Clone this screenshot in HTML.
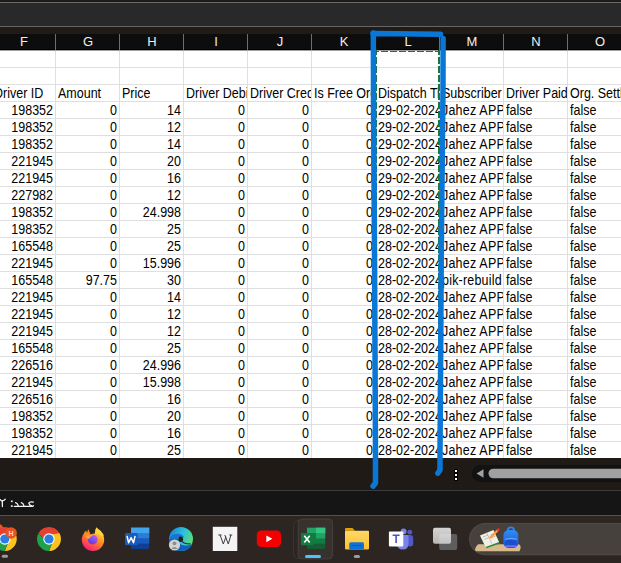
<!DOCTYPE html>
<html><head><meta charset="utf-8"><style>
*{margin:0;padding:0;box-sizing:border-box}
html,body{width:621px;height:563px;overflow:hidden;background:#1f1a16;position:relative;font-family:"Liberation Sans",sans-serif}
.abs{position:absolute}
#grid{position:absolute;left:0;top:50px;width:621px;height:408px;background:#fff;overflow:hidden}
.vl{position:absolute;top:0;width:1px;height:408px;background:#dfdfdf}
.hl{position:absolute;left:0;width:621px;height:1px;background:#dfdfdf}
.c{position:absolute;width:63px;height:16px;overflow:hidden;white-space:nowrap;font-size:12.5px;line-height:16px;color:#000;padding-left:2px;letter-spacing:0px;transform:scaleY(1.14);transform-origin:50% 13px}
.c.m{letter-spacing:0.2px}
.c.r{text-align:right;padding-left:0;padding-right:2px}
#hdr{position:absolute;left:0;top:34px;width:621px;height:16px;overflow:hidden}
#hdrbg{position:absolute;left:0;top:34px;width:621px;height:15px;background:#0d0d0d}
.hsep{position:absolute;top:0;width:1px;height:16px;background:#6d6d72}
.ch{position:absolute;top:0;width:64px;margin-left:1px;height:15px;text-align:center;color:#f0f0f0;font-size:13px;line-height:15px}
</style></head><body>
<div class="abs" style="left:0;top:0;width:621px;height:2px;background:#1e1915"></div>
<div class="abs" style="left:0;top:2px;width:621px;height:1px;background:#6a6a6a"></div>
<div class="abs" style="left:0;top:3px;width:621px;height:23px;background:#292929"></div>
<div class="abs" style="left:0;top:26px;width:621px;height:1px;background:#666"></div>
<div class="abs" style="left:0;top:27px;width:621px;height:7px;background:#211b17"></div>
<div id="hdrbg"></div>
<div class="abs" style="left:0;top:49px;width:621px;height:1px;background:#000"></div>
<div id="hdr">
<div class="hsep" style="left:55px"></div>
<div class="hsep" style="left:119px"></div>
<div class="hsep" style="left:183px"></div>
<div class="hsep" style="left:247px"></div>
<div class="hsep" style="left:311px"></div>
<div class="hsep" style="left:375px"></div>
<div class="hsep" style="left:439px"></div>
<div class="hsep" style="left:503px"></div>
<div class="hsep" style="left:567px"></div>
<div class="ch" style="left:-9px">F</div>
<div class="ch" style="left:55px">G</div>
<div class="ch" style="left:119px">H</div>
<div class="ch" style="left:183px">I</div>
<div class="ch" style="left:247px">J</div>
<div class="ch" style="left:311px">K</div>
<div class="ch" style="left:375px">L</div>
<div class="ch" style="left:439px">M</div>
<div class="ch" style="left:503px">N</div>
<div class="ch" style="left:567px">O</div>
</div>
<div id="grid">
<div class="vl" style="left:55px"></div>
<div class="vl" style="left:119px"></div>
<div class="vl" style="left:183px"></div>
<div class="vl" style="left:247px"></div>
<div class="vl" style="left:311px"></div>
<div class="vl" style="left:375px"></div>
<div class="vl" style="left:439px"></div>
<div class="vl" style="left:503px"></div>
<div class="vl" style="left:567px"></div>
<div class="hl" style="top:17px"></div>
<div class="hl" style="top:34px"></div>
<div class="hl" style="top:51px"></div>
<div class="hl" style="top:68px"></div>
<div class="hl" style="top:85px"></div>
<div class="hl" style="top:102px"></div>
<div class="hl" style="top:119px"></div>
<div class="hl" style="top:136px"></div>
<div class="hl" style="top:153px"></div>
<div class="hl" style="top:170px"></div>
<div class="hl" style="top:187px"></div>
<div class="hl" style="top:204px"></div>
<div class="hl" style="top:221px"></div>
<div class="hl" style="top:238px"></div>
<div class="hl" style="top:255px"></div>
<div class="hl" style="top:272px"></div>
<div class="hl" style="top:289px"></div>
<div class="hl" style="top:306px"></div>
<div class="hl" style="top:323px"></div>
<div class="hl" style="top:340px"></div>
<div class="hl" style="top:357px"></div>
<div class="hl" style="top:374px"></div>
<div class="hl" style="top:391px"></div>
<div class="abs" style="left:0;top:0;width:621px;height:1px;background:#a0a0a0"></div>
<div class="c" style="left:-8px;top:36px">Driver ID</div>
<div class="c" style="left:56px;top:36px">Amount</div>
<div class="c" style="left:120px;top:36px">Price</div>
<div class="c" style="left:184px;top:36px">Driver Debit</div>
<div class="c" style="left:248px;top:36px">Driver Credit</div>
<div class="c" style="left:312px;top:36px">Is Free Order</div>
<div class="c" style="left:376px;top:36px">Dispatch Time</div>
<div class="c" style="left:440px;top:36px">Subscriber</div>
<div class="c" style="left:504px;top:36px">Driver Paid</div>
<div class="c" style="left:568px;top:36px">Org. Settled</div>
<div class="c r" style="left:-8px;top:53px">198352</div>
<div class="c r" style="left:56px;top:53px">0</div>
<div class="c r" style="left:120px;top:53px">14</div>
<div class="c r" style="left:184px;top:53px">0</div>
<div class="c r" style="left:248px;top:53px">0</div>
<div class="c r" style="left:312px;top:53px">0</div>
<div class="c" style="left:376px;top:53px">29-02-2024</div>
<div class="c m" style="left:440px;top:53px">Jahez APP</div>
<div class="c" style="left:504px;top:53px">false</div>
<div class="c" style="left:568px;top:53px">false</div>
<div class="c r" style="left:-8px;top:70px">198352</div>
<div class="c r" style="left:56px;top:70px">0</div>
<div class="c r" style="left:120px;top:70px">12</div>
<div class="c r" style="left:184px;top:70px">0</div>
<div class="c r" style="left:248px;top:70px">0</div>
<div class="c r" style="left:312px;top:70px">0</div>
<div class="c" style="left:376px;top:70px">29-02-2024</div>
<div class="c m" style="left:440px;top:70px">Jahez APP</div>
<div class="c" style="left:504px;top:70px">false</div>
<div class="c" style="left:568px;top:70px">false</div>
<div class="c r" style="left:-8px;top:87px">198352</div>
<div class="c r" style="left:56px;top:87px">0</div>
<div class="c r" style="left:120px;top:87px">14</div>
<div class="c r" style="left:184px;top:87px">0</div>
<div class="c r" style="left:248px;top:87px">0</div>
<div class="c r" style="left:312px;top:87px">0</div>
<div class="c" style="left:376px;top:87px">29-02-2024</div>
<div class="c m" style="left:440px;top:87px">Jahez APP</div>
<div class="c" style="left:504px;top:87px">false</div>
<div class="c" style="left:568px;top:87px">false</div>
<div class="c r" style="left:-8px;top:104px">221945</div>
<div class="c r" style="left:56px;top:104px">0</div>
<div class="c r" style="left:120px;top:104px">20</div>
<div class="c r" style="left:184px;top:104px">0</div>
<div class="c r" style="left:248px;top:104px">0</div>
<div class="c r" style="left:312px;top:104px">0</div>
<div class="c" style="left:376px;top:104px">29-02-2024</div>
<div class="c m" style="left:440px;top:104px">Jahez APP</div>
<div class="c" style="left:504px;top:104px">false</div>
<div class="c" style="left:568px;top:104px">false</div>
<div class="c r" style="left:-8px;top:121px">221945</div>
<div class="c r" style="left:56px;top:121px">0</div>
<div class="c r" style="left:120px;top:121px">16</div>
<div class="c r" style="left:184px;top:121px">0</div>
<div class="c r" style="left:248px;top:121px">0</div>
<div class="c r" style="left:312px;top:121px">0</div>
<div class="c" style="left:376px;top:121px">29-02-2024</div>
<div class="c m" style="left:440px;top:121px">Jahez APP</div>
<div class="c" style="left:504px;top:121px">false</div>
<div class="c" style="left:568px;top:121px">false</div>
<div class="c r" style="left:-8px;top:138px">227982</div>
<div class="c r" style="left:56px;top:138px">0</div>
<div class="c r" style="left:120px;top:138px">12</div>
<div class="c r" style="left:184px;top:138px">0</div>
<div class="c r" style="left:248px;top:138px">0</div>
<div class="c r" style="left:312px;top:138px">0</div>
<div class="c" style="left:376px;top:138px">29-02-2024</div>
<div class="c m" style="left:440px;top:138px">Jahez APP</div>
<div class="c" style="left:504px;top:138px">false</div>
<div class="c" style="left:568px;top:138px">false</div>
<div class="c r" style="left:-8px;top:155px">198352</div>
<div class="c r" style="left:56px;top:155px">0</div>
<div class="c r" style="left:120px;top:155px">24.998</div>
<div class="c r" style="left:184px;top:155px">0</div>
<div class="c r" style="left:248px;top:155px">0</div>
<div class="c r" style="left:312px;top:155px">0</div>
<div class="c" style="left:376px;top:155px">29-02-2024</div>
<div class="c m" style="left:440px;top:155px">Jahez APP</div>
<div class="c" style="left:504px;top:155px">false</div>
<div class="c" style="left:568px;top:155px">false</div>
<div class="c r" style="left:-8px;top:172px">198352</div>
<div class="c r" style="left:56px;top:172px">0</div>
<div class="c r" style="left:120px;top:172px">25</div>
<div class="c r" style="left:184px;top:172px">0</div>
<div class="c r" style="left:248px;top:172px">0</div>
<div class="c r" style="left:312px;top:172px">0</div>
<div class="c" style="left:376px;top:172px">28-02-2024</div>
<div class="c m" style="left:440px;top:172px">Jahez APP</div>
<div class="c" style="left:504px;top:172px">false</div>
<div class="c" style="left:568px;top:172px">false</div>
<div class="c r" style="left:-8px;top:189px">165548</div>
<div class="c r" style="left:56px;top:189px">0</div>
<div class="c r" style="left:120px;top:189px">25</div>
<div class="c r" style="left:184px;top:189px">0</div>
<div class="c r" style="left:248px;top:189px">0</div>
<div class="c r" style="left:312px;top:189px">0</div>
<div class="c" style="left:376px;top:189px">28-02-2024</div>
<div class="c m" style="left:440px;top:189px">Jahez APP</div>
<div class="c" style="left:504px;top:189px">false</div>
<div class="c" style="left:568px;top:189px">false</div>
<div class="c r" style="left:-8px;top:206px">221945</div>
<div class="c r" style="left:56px;top:206px">0</div>
<div class="c r" style="left:120px;top:206px">15.996</div>
<div class="c r" style="left:184px;top:206px">0</div>
<div class="c r" style="left:248px;top:206px">0</div>
<div class="c r" style="left:312px;top:206px">0</div>
<div class="c" style="left:376px;top:206px">28-02-2024</div>
<div class="c m" style="left:440px;top:206px">Jahez APP</div>
<div class="c" style="left:504px;top:206px">false</div>
<div class="c" style="left:568px;top:206px">false</div>
<div class="c r" style="left:-8px;top:223px">165548</div>
<div class="c r" style="left:56px;top:223px">97.75</div>
<div class="c r" style="left:120px;top:223px">30</div>
<div class="c r" style="left:184px;top:223px">0</div>
<div class="c r" style="left:248px;top:223px">0</div>
<div class="c r" style="left:312px;top:223px">0</div>
<div class="c" style="left:376px;top:223px">28-02-2024</div>
<div class="c m" style="left:440px;top:223px">pik-rebuild</div>
<div class="c" style="left:504px;top:223px">false</div>
<div class="c" style="left:568px;top:223px">false</div>
<div class="c r" style="left:-8px;top:240px">221945</div>
<div class="c r" style="left:56px;top:240px">0</div>
<div class="c r" style="left:120px;top:240px">14</div>
<div class="c r" style="left:184px;top:240px">0</div>
<div class="c r" style="left:248px;top:240px">0</div>
<div class="c r" style="left:312px;top:240px">0</div>
<div class="c" style="left:376px;top:240px">28-02-2024</div>
<div class="c m" style="left:440px;top:240px">Jahez APP</div>
<div class="c" style="left:504px;top:240px">false</div>
<div class="c" style="left:568px;top:240px">false</div>
<div class="c r" style="left:-8px;top:257px">221945</div>
<div class="c r" style="left:56px;top:257px">0</div>
<div class="c r" style="left:120px;top:257px">12</div>
<div class="c r" style="left:184px;top:257px">0</div>
<div class="c r" style="left:248px;top:257px">0</div>
<div class="c r" style="left:312px;top:257px">0</div>
<div class="c" style="left:376px;top:257px">28-02-2024</div>
<div class="c m" style="left:440px;top:257px">Jahez APP</div>
<div class="c" style="left:504px;top:257px">false</div>
<div class="c" style="left:568px;top:257px">false</div>
<div class="c r" style="left:-8px;top:274px">221945</div>
<div class="c r" style="left:56px;top:274px">0</div>
<div class="c r" style="left:120px;top:274px">12</div>
<div class="c r" style="left:184px;top:274px">0</div>
<div class="c r" style="left:248px;top:274px">0</div>
<div class="c r" style="left:312px;top:274px">0</div>
<div class="c" style="left:376px;top:274px">28-02-2024</div>
<div class="c m" style="left:440px;top:274px">Jahez APP</div>
<div class="c" style="left:504px;top:274px">false</div>
<div class="c" style="left:568px;top:274px">false</div>
<div class="c r" style="left:-8px;top:291px">165548</div>
<div class="c r" style="left:56px;top:291px">0</div>
<div class="c r" style="left:120px;top:291px">25</div>
<div class="c r" style="left:184px;top:291px">0</div>
<div class="c r" style="left:248px;top:291px">0</div>
<div class="c r" style="left:312px;top:291px">0</div>
<div class="c" style="left:376px;top:291px">28-02-2024</div>
<div class="c m" style="left:440px;top:291px">Jahez APP</div>
<div class="c" style="left:504px;top:291px">false</div>
<div class="c" style="left:568px;top:291px">false</div>
<div class="c r" style="left:-8px;top:308px">226516</div>
<div class="c r" style="left:56px;top:308px">0</div>
<div class="c r" style="left:120px;top:308px">24.996</div>
<div class="c r" style="left:184px;top:308px">0</div>
<div class="c r" style="left:248px;top:308px">0</div>
<div class="c r" style="left:312px;top:308px">0</div>
<div class="c" style="left:376px;top:308px">28-02-2024</div>
<div class="c m" style="left:440px;top:308px">Jahez APP</div>
<div class="c" style="left:504px;top:308px">false</div>
<div class="c" style="left:568px;top:308px">false</div>
<div class="c r" style="left:-8px;top:325px">221945</div>
<div class="c r" style="left:56px;top:325px">0</div>
<div class="c r" style="left:120px;top:325px">15.998</div>
<div class="c r" style="left:184px;top:325px">0</div>
<div class="c r" style="left:248px;top:325px">0</div>
<div class="c r" style="left:312px;top:325px">0</div>
<div class="c" style="left:376px;top:325px">28-02-2024</div>
<div class="c m" style="left:440px;top:325px">Jahez APP</div>
<div class="c" style="left:504px;top:325px">false</div>
<div class="c" style="left:568px;top:325px">false</div>
<div class="c r" style="left:-8px;top:342px">226516</div>
<div class="c r" style="left:56px;top:342px">0</div>
<div class="c r" style="left:120px;top:342px">16</div>
<div class="c r" style="left:184px;top:342px">0</div>
<div class="c r" style="left:248px;top:342px">0</div>
<div class="c r" style="left:312px;top:342px">0</div>
<div class="c" style="left:376px;top:342px">28-02-2024</div>
<div class="c m" style="left:440px;top:342px">Jahez APP</div>
<div class="c" style="left:504px;top:342px">false</div>
<div class="c" style="left:568px;top:342px">false</div>
<div class="c r" style="left:-8px;top:359px">198352</div>
<div class="c r" style="left:56px;top:359px">0</div>
<div class="c r" style="left:120px;top:359px">20</div>
<div class="c r" style="left:184px;top:359px">0</div>
<div class="c r" style="left:248px;top:359px">0</div>
<div class="c r" style="left:312px;top:359px">0</div>
<div class="c" style="left:376px;top:359px">28-02-2024</div>
<div class="c m" style="left:440px;top:359px">Jahez APP</div>
<div class="c" style="left:504px;top:359px">false</div>
<div class="c" style="left:568px;top:359px">false</div>
<div class="c r" style="left:-8px;top:376px">198352</div>
<div class="c r" style="left:56px;top:376px">0</div>
<div class="c r" style="left:120px;top:376px">16</div>
<div class="c r" style="left:184px;top:376px">0</div>
<div class="c r" style="left:248px;top:376px">0</div>
<div class="c r" style="left:312px;top:376px">0</div>
<div class="c" style="left:376px;top:376px">28-02-2024</div>
<div class="c m" style="left:440px;top:376px">Jahez APP</div>
<div class="c" style="left:504px;top:376px">false</div>
<div class="c" style="left:568px;top:376px">false</div>
<div class="c r" style="left:-8px;top:393px">221945</div>
<div class="c r" style="left:56px;top:393px">0</div>
<div class="c r" style="left:120px;top:393px">25</div>
<div class="c r" style="left:184px;top:393px">0</div>
<div class="c r" style="left:248px;top:393px">0</div>
<div class="c r" style="left:312px;top:393px">0</div>
<div class="c" style="left:376px;top:393px">28-02-2024</div>
<div class="c m" style="left:440px;top:393px">Jahez APP</div>
<div class="c" style="left:504px;top:393px">false</div>
<div class="c" style="left:568px;top:393px">false</div>
</div>
<div class="abs" style="left:0;top:490px;width:621px;height:1px;background:#3b3b3b"></div>
<div class="abs" style="left:0;top:491px;width:621px;height:24px;background:#151515"></div>
<div class="abs" style="left:0;top:515px;width:621px;height:48px;background:#2c2522"></div>

<!-- marching ants -->
<div class="abs" style="left:376px;top:51px;width:63px;height:1px;background:linear-gradient(to right,#1a7540 0 7px,transparent 7px 9px);background-size:9px 1px;background-position:-4px 0"></div>
<div id="antsR" class="abs" style="left:438px;top:50px;width:2px;height:408px;background:linear-gradient(to bottom,#1a7540 0 7px,transparent 7px 9px);background-size:2px 9px;background-position:0 -2px"></div>
<div class="abs" style="left:376px;top:50px;width:1px;height:408px;background:linear-gradient(to bottom,#1a7540 0 7px,transparent 7px 9px);background-size:1px 9px;background-position:0 -2px"></div>
<!-- bottom bar -->
<div class="abs" style="left:455px;top:470px;width:2px;height:2px;background:#fff;box-shadow:0 0 0 1px #000"></div>
<div class="abs" style="left:455px;top:474px;width:2px;height:2px;background:#fff;box-shadow:0 0 0 1px #000"></div>
<div class="abs" style="left:455px;top:478px;width:2px;height:2px;background:#fff;box-shadow:0 0 0 1px #000"></div>
<div class="abs" style="left:472px;top:465px;width:170px;height:17px;border-radius:8.5px;background:#121212"></div>
<svg class="abs" style="left:0;top:0" width="621" height="563">
<path d="M476.5,473.5 L483.5,469.2 L483.5,477.8 Z" fill="#a2a2a2"/>
<rect x="488.5" y="468.7" width="150" height="9.6" rx="4.8" fill="#a0a0a0"/>
</svg>
<!-- status text -->
<svg class="abs" style="left:0;top:494px" width="40" height="18" fill="none" stroke="#f2f2f2" stroke-width="1.3" stroke-linecap="round" stroke-linejoin="round">
<path d="M0.3,5.6 Q1.3,7.4 2.3,6.6 L2.4,12.6"/>
<path d="M2.5,6.9 Q4.2,6.6 5.3,5.2"/>
<rect x="10.9" y="6.5" width="1.8" height="1.6" fill="#f2f2f2" stroke="none"/>
<rect x="10.9" y="11.3" width="1.8" height="1.6" fill="#f2f2f2" stroke="none"/>
<path d="M14.3,12.3 L32.3,12.3 Q33.6,12.2 33.4,11.6"/>
<path d="M15.6,8.6 Q17.9,9.4 18.3,12.2"/>
<path d="M21.3,8.6 Q23.6,9.4 24,12.2"/>
<path d="M33.3,8.2 Q29.6,7.2 28.8,9.2 Q29.4,11.2 32,12.2"/>
</svg>

<!-- taskbar -->
<svg class="abs" style="left:0;top:515px" width="621" height="48" viewBox="0 515 621 48">
<defs>
<linearGradient id="ff" x1="0.8" y1="0" x2="0.2" y2="1"><stop offset="0" stop-color="#ffe54a"/><stop offset="0.45" stop-color="#ff8a1c"/><stop offset="0.8" stop-color="#ff3b5c"/><stop offset="1" stop-color="#e5178a"/></linearGradient>
<linearGradient id="edge" x1="0" y1="1" x2="1" y2="0"><stop offset="0" stop-color="#0c54b4"/><stop offset="0.45" stop-color="#1b9de2"/><stop offset="0.7" stop-color="#30c0d8"/><stop offset="1" stop-color="#6ae35a"/></linearGradient>
<linearGradient id="fold" x1="0" y1="0" x2="0" y2="1"><stop offset="0" stop-color="#ffd96a"/><stop offset="1" stop-color="#ffc02a"/></linearGradient>
<linearGradient id="tv" x1="0" y1="0" x2="0" y2="1"><stop offset="0" stop-color="#ffffff"/><stop offset="1" stop-color="#dcdcdc"/></linearGradient>
<linearGradient id="bp" x1="0" y1="0" x2="0" y2="1"><stop offset="0" stop-color="#2e8cf5"/><stop offset="1" stop-color="#1a55d8"/></linearGradient>
</defs>
<rect x="0" y="515" width="621" height="1" fill="#55504b"/>
<!-- chrome 1 -->
<circle cx="-2.5" cy="530" r="6.2" fill="#ec5a22"/>
<g transform="translate(4.8,539)">
<path d="M-5.6,0 L-10.39,-6 A12,12 0 0,1 10.39,-6 L2.8,-4.85 L0,0 Z" fill="#e34133"/>
<path d="M2.8,-4.85 L10.39,-6 A12,12 0 0,1 0,12 L2.8,4.85 L0,0 Z" fill="#fcc31e"/>
<path d="M2.8,4.85 L0,12 A12,12 0 0,1 -10.39,-6 L-5.6,0 L0,0 Z" fill="#1fa24a"/>
<circle r="5.7" fill="#fff"/><circle r="4.6" fill="#2a7de8"/></g>
<circle cx="11.1" cy="533" r="5.8" fill="#e9531f"/>
<text x="11.1" y="536" font-family="Liberation Sans" font-size="7" font-weight="bold" fill="#ffd9c8" text-anchor="middle">H</text>
<rect x="1.8" y="554.8" width="6.2" height="3" rx="1.5" fill="#9c9c9c"/>
<!-- chrome 2 -->
<g transform="translate(49,539)">
<path d="M-5.6,0 L-10.39,-6 A12,12 0 0,1 10.39,-6 L2.8,-4.85 L0,0 Z" fill="#e34133"/>
<path d="M2.8,-4.85 L10.39,-6 A12,12 0 0,1 0,12 L2.8,4.85 L0,0 Z" fill="#fcc31e"/>
<path d="M2.8,4.85 L0,12 A12,12 0 0,1 -10.39,-6 L-5.6,0 L0,0 Z" fill="#1fa24a"/>
<circle r="5.7" fill="#fff"/><circle r="4.6" fill="#2a7de8"/></g>
<!-- firefox -->
<defs>
<linearGradient id="glb" x1="0.8" y1="0" x2="0.2" y2="1"><stop offset="0" stop-color="#b363ff"/><stop offset="1" stop-color="#5a38d6"/></linearGradient>
</defs>
<circle cx="93" cy="539.8" r="11.2" fill="url(#ff)"/>
<path d="M88.7,530.3 L90.4,534.6 Q92.6,533.6 94.8,533.6 L96.2,527 L87.5,526.5 Z" fill="#2c2522"/>
<path d="M85.9,529.6 L87,533.2 L88.2,529.6 Z" fill="#2c2522"/>
<path d="M96.2,527.2 Q101,530.5 103.5,534.5 Q104,537 102,536.5 Q99,533 94.8,533.6 Z" fill="#ffd43a"/>
<path d="M84.8,530.8 L87,533.6 L88.6,530.6 L90.6,534.8 Q87.6,535.5 85.6,537.5 Q84.2,534 84.8,530.8 Z" fill="#ff8a24"/>
<circle cx="92.7" cy="539.6" r="4.9" fill="url(#glb)"/>
<path d="M85.4,536.4 Q89,534 93.6,535 Q90.2,536.2 89.6,538.6 Q87.5,539.2 85.4,536.4 Z" fill="#ffa030"/>
<!-- word -->
<rect x="131" y="527.7" width="18.2" height="21.3" rx="1" fill="#103f91"/>
<rect x="131" y="527.7" width="18.2" height="15.9" fill="#185abd"/>
<rect x="131" y="527.7" width="18.2" height="10.6" fill="#2b7cd3"/>
<rect x="131" y="527.7" width="18.2" height="5.4" fill="#41a5ee"/>
<rect x="125" y="533" width="12.6" height="12.3" rx="1" fill="#185abd"/>
<path d="M127,535.8 L128.6,542.8 L131.1,537.6 L133.5,542.8 L135.1,535.8" fill="none" stroke="#fff" stroke-width="1.5" stroke-linejoin="round"/>
<!-- edge -->
<defs><linearGradient id="edgeT" x1="0" y1="0.3" x2="1" y2="0.7"><stop offset="0" stop-color="#1a86d6"/><stop offset="0.5" stop-color="#2cc0e0"/><stop offset="1" stop-color="#62e25a"/></linearGradient></defs>
<circle cx="181" cy="539" r="12" fill="url(#edgeT)"/>
<path d="M169,540.5 Q169.8,533.6 178.5,533.8 Q183,534.2 184.2,537.6 Q180,535.4 177.8,538.6 Q172.5,537.6 169,540.5 Z" fill="#1873d2"/>
<path d="M169,540 Q172.5,537.6 177.8,538.6 Q177.3,542.5 181.5,544.8 Q186,546.2 192.6,544.2 Q189.5,550.8 181,551 Q170,551 169,540 Z" fill="#0f5ec4"/>
<ellipse cx="180.7" cy="539.3" rx="2.4" ry="2.7" fill="#241e1b"/>
<path d="M181.8,541.4 Q184.8,544.6 190.8,543.8" stroke="#1f3a6a" stroke-width="1.3" fill="none"/>
<circle cx="174.5" cy="545" r="5.6" fill="#d2d2d2"/>
<circle cx="174.5" cy="543.3" r="1.9" fill="#8e8e8e"/>
<path d="M171.2,549 Q174.5,544.8 177.8,549 Z" fill="#8e8e8e"/>
<!-- wikipedia -->
<rect x="212.8" y="526.8" width="24.5" height="24.2" fill="#f4f4f4"/>
<path d="M218.3,534.9 L221.6,535 M220.1,535 L223.3,544 L226,536.8 M224.8,535 L228.3,544 L230.9,535 M229.3,535 L232.2,535" fill="none" stroke="#3c3c3c" stroke-width="1"/>
<!-- youtube -->
<rect x="256.8" y="530.5" width="24.2" height="16.5" rx="4.2" fill="#f40000"/>
<path d="M266.3,535.5 L272.4,538.8 L266.3,542.2 Z" fill="#fff"/>
<!-- excel tile -->
<rect x="293.6" y="520.5" width="36" height="38" rx="5" fill="none" stroke="#3d3834" stroke-width="0.9"/>
<rect x="298.2" y="519" width="34.4" height="40" rx="4" fill="#38322e" stroke="#4a4440" stroke-width="0.8"/>
<rect x="307" y="527.8" width="18.2" height="21.3" rx="1" fill="#185c37"/>
<rect x="307" y="527.8" width="18.2" height="15.9" fill="#107c41"/>
<rect x="316" y="527.8" width="9.2" height="10.6" fill="#21a366"/>
<rect x="307" y="527.8" width="18.2" height="5.3" fill="#21a366"/>
<rect x="316" y="527.8" width="9.2" height="5.3" fill="#33c481"/>
<rect x="301" y="533" width="12.6" height="12.3" rx="1" fill="#107c41"/>
<path d="M304.3,535.8 L309.7,542.6 M309.7,535.8 L304.3,542.6" stroke="#fff" stroke-width="1.6"/>
<rect x="305" y="555" width="16" height="3" rx="1.5" fill="#4cc2ff"/>
<!-- explorer -->
<path d="M345,549.4 L345,529 Q345,528 346,528 L352.5,528 L355,530.8 L345,530.8 Z" fill="#e3a000"/>
<rect x="345" y="530.8" width="24" height="18.6" rx="0.8" fill="url(#fold)"/>
<rect x="349.2" y="542.3" width="14.8" height="7.1" rx="1.5" fill="#0f72d6"/>
<rect x="351.5" y="545.2" width="10" height="0.9" fill="#0a57b0"/>
<rect x="353.8" y="555" width="6.2" height="3" rx="1.5" fill="#9d9d9d"/>
<!-- teams -->
<rect x="407" y="535" width="6.2" height="11.5" rx="3" fill="#5059c9"/>
<circle cx="409.8" cy="532.2" r="2.4" fill="#5059c9"/>
<path d="M397,535 L408.5,535 L408.5,543.5 Q408.5,549.6 402.8,549.6 Q397,549.6 397,543.5 Z" fill="#7b83eb"/>
<circle cx="403.6" cy="531.4" r="2.9" fill="#7b83eb"/>
<rect x="388.9" y="531.6" width="14.4" height="14.8" rx="0.8" fill="#fdfdfd"/>
<path d="M392.6,535.2 L399.6,535.2 M396.1,535.2 L396.1,543" stroke="#4b53bc" stroke-width="1.6"/>
<!-- task view -->
<rect x="439.2" y="534" width="18" height="16" rx="2" fill="#5e5e5e"/>
<rect x="433" y="527.7" width="18" height="16.1" rx="2" fill="url(#tv)" opacity="0.8"/>
<!-- search -->
<rect x="469.4" y="523.4" width="170" height="31.4" rx="15.7" fill="#46413d" stroke="#58524d" stroke-width="0.8"/>
<path d="M478,544.3 L519,544.3 Q522,546 519.5,551.2 L476,551.2 Q473.5,549 478,544.3 Z" fill="#d8ba8c"/>
<path d="M480.5,537 L494,531.5 L500,543.5 L486.5,548.2 Z" fill="#2f8a3c"/>
<path d="M480,535.5 L493.5,530 L499,542 L485.5,547 Z" fill="#f1efe6"/>
<path d="M486.8,532.8 L492.2,544.6" stroke="#b9b6a8" stroke-width="0.7"/>
<path d="M483,537 L488,535 M484.2,539.5 L489.2,537.5 M490.5,535 L494.5,533.4 M491.7,537.5 L495.7,535.9" stroke="#9c9a90" stroke-width="0.6"/>
<path d="M490,538 L498,530" stroke="#ff9a3c" stroke-width="2.2"/>
<path d="M497.3,530.7 L499.2,528.8" stroke="#e53935" stroke-width="2.2"/>
<path d="M507.6,531.5 Q507.6,527.4 510.9,527.4 Q514.2,527.4 514.2,531.5" fill="none" stroke="#2a86f0" stroke-width="1.8"/>
<rect x="503.4" y="530" width="15" height="18" rx="5.5" fill="url(#bp)"/>
<path d="M505,539.3 Q510.9,537.4 516.8,539.3" stroke="#78b4ff" stroke-width="0.9" fill="none"/>
<rect x="505" y="540" width="11.8" height="6.6" rx="2" fill="#1b4fcf"/>
<rect x="505.2" y="545.6" width="11.4" height="1.2" rx="0.6" fill="#8f7dff"/>
</svg>
<!-- pen lines -->
<svg class="abs" style="left:0;top:0" width="621" height="563" fill="none" stroke="#0a76d6" stroke-width="5.5" stroke-linecap="round" stroke-linejoin="round">
<path d="M440.5,34.2 L373.3,33.6 L373.5,100 L374.5,250 L375,350 L375.5,455 L375.5,483 L373,486.2"/>
<circle cx="373.4" cy="33.4" r="3.1" fill="#0a76d6" stroke="none"/>
<path d="M443.1,38.6 L443,90 L441.3,250 L440.7,350 L440,455 L440,470 L437.8,473.2"/>
</svg>
</body></html>
